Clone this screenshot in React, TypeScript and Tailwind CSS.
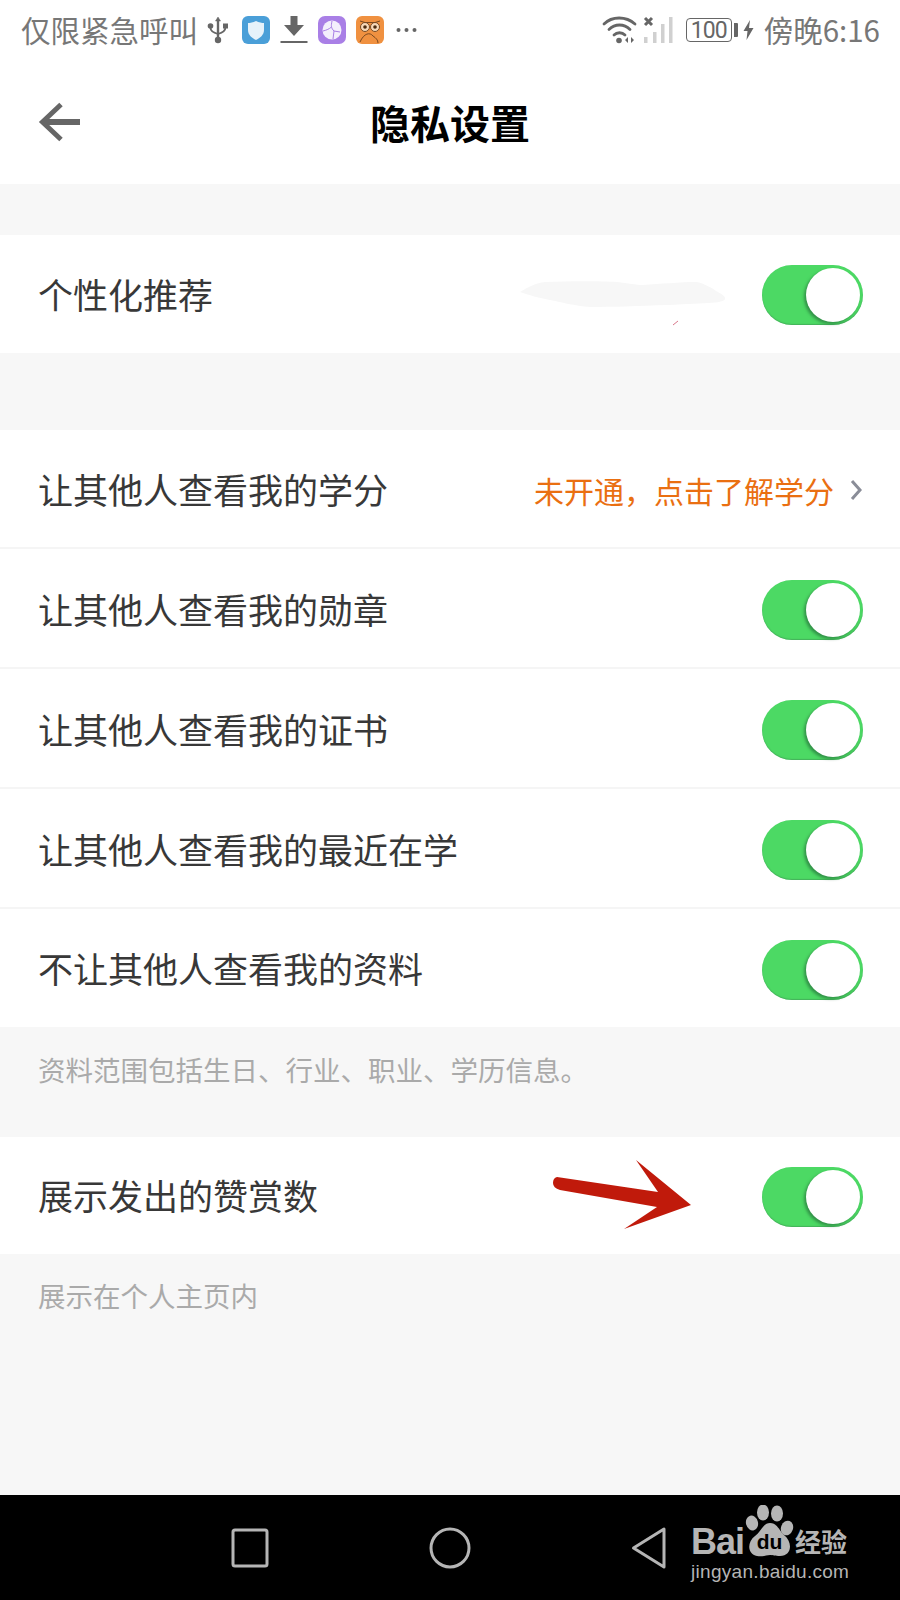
import React from "react";

const FONT = "[font-family:'Noto_Sans_CJK_SC','Noto_Sans',sans-serif]";

function Toggle() {
  return (
    <div className="mt-[2px] flex h-[60px] w-[101px] items-center justify-end rounded-full bg-[#4cd964] pr-[3px] shadow-[inset_0_-1px_1px_rgba(60,140,80,0.5)]">
      <div className="h-[54px] w-[54px] rounded-full bg-white shadow-[-2px_2px_3px_rgba(30,90,50,0.55)]" />
    </div>
  );
}

function Row({ label, children, divider, height = "h-[120px]", extra = "" }: { label: string; children?: React.ReactNode; divider?: boolean; height?: string; extra?: string }) {
  return (
    <div className={`relative flex ${height} items-center justify-between bg-white pl-[38px] pr-[37px] ${divider ? "border-b-2 border-[#f5f5f5] pt-[2px]" : ""} ${extra}`}>
      <span className="mb-[2px] text-[35px] leading-none text-[#383838]">{label}</span>
      {children}
    </div>
  );
}

function StatusIcons() {
  return (
    <div className="ml-[9px] flex items-center">
      {/* usb */}
      <svg width="22" height="30" viewBox="0 0 22 30" className="mr-[13px]">
        <g fill="#666" stroke="#666">
          <path d="M11 2 L8.500 6 H13.500 Z" strokeWidth="0.5" />
          <path d="M11 5 V24" strokeWidth="2.400" fill="none" />
          <circle cx="11" cy="25" r="3.200" stroke="none" />
          <circle cx="3.500" cy="11" r="2.800" stroke="none" />
          <rect x="16" y="8.500" width="5" height="5" stroke="none" />
          <path d="M3.500 11 V13 Q3.500 17 11 19 Q18.500 17 18.500 12" strokeWidth="1.800" fill="none" />
        </g>
      </svg>
      {/* shield app */}
      <svg width="28" height="28" viewBox="0 0 28 28" className="mr-[10px]">
        <rect width="28" height="28" rx="6" fill="#4a9fd8" />
        <path d="M14 5 C17 6.500 20 7 22 7 V14 C22 19 18 22 14 24 C10 22 6 19 6 14 V7 C8 7 11 6.500 14 5 Z" fill="#e6f2fa" />
      </svg>
      {/* download */}
      <svg width="28" height="30" viewBox="0 0 28 30" className="mr-[10px]">
        <path d="M10.500 1 H17.500 V10 H24 L14 21 L4 10 H10.500 Z" fill="#666" />
        <rect x="0.500" y="26" width="27" height="2" fill="#666" />
      </svg>
      {/* purple app */}
      <svg width="28" height="28" viewBox="0 0 28 28" className="mr-[10px]">
        <rect width="28" height="28" rx="7" fill="#a97fe6" />
        <circle cx="14" cy="14" r="9.500" fill="#f4effc" />
        <path d="M14 5 C13 10 13 12 16 15 L22 16 M16 15 L15 23 M5 15 C9 14 11 13 13.500 11" stroke="#a97fe6" strokeWidth="1" fill="none" />
      </svg>
      {/* owl app */}
      <svg width="28" height="28" viewBox="0 0 28 28" className="mr-[12px]">
        <rect width="28" height="28" rx="6" fill="#f09140" />
        <circle cx="9" cy="11" r="4.500" fill="#f6d9b8" stroke="#7a4a20" strokeWidth="1" />
        <circle cx="19" cy="11" r="4.500" fill="#f6d9b8" stroke="#7a4a20" strokeWidth="1" />
        <circle cx="9" cy="11" r="1.800" fill="#4a2c10" />
        <circle cx="19" cy="11" r="1.800" fill="#4a2c10" />
        <path d="M4 5 L9 6.500 H19 L24 5 M4 26 C8 17 14 16 17 20 C20 22 22 24 22 27" stroke="#7a4a20" strokeWidth="1" fill="none" />
      </svg>
      {/* dots */}
      <svg width="21" height="6" viewBox="0 0 21 6">
        <circle cx="2.500" cy="3" r="2" fill="#666" />
        <circle cx="10.500" cy="3" r="2" fill="#666" />
        <circle cx="18.500" cy="3" r="2" fill="#666" />
      </svg>
    </div>
  );
}

function StatusRight() {
  return (
    <div className="flex items-center">
      {/* wifi */}
      <svg width="36" height="30" viewBox="0 0 36 30" className="mr-[5px]">
        <g fill="none" stroke="#666" strokeWidth="2.800" strokeLinecap="round">
          <path d="M2 9 C10 1 24 1 33 9" />
          <path d="M7 14.500 C13 8.500 22 8.500 28 14.500" />
          <path d="M12 20 C15 17 20 17 23 20" />
        </g>
        <circle cx="17" cy="25.500" r="2.800" fill="#666" />
        <path d="M26 22 V28 L23 25 Z M29 22 V28 L32 25 Z" fill="#666" />
      </svg>
      {/* signal */}
      <svg width="30" height="30" viewBox="0 0 30 30" className="mr-[13px]">
        <path d="M2 3 L9 10 M9 3 L2 10" stroke="#666" strokeWidth="3" />
        <rect x="1" y="22" width="3.500" height="6" fill="#d0d0d0" />
        <rect x="10" y="17" width="3.500" height="11" fill="#d0d0d0" />
        <rect x="18" y="9" width="3.500" height="19" fill="#d0d0d0" />
        <rect x="26" y="2" width="3.500" height="26" fill="#d0d0d0" />
      </svg>
      {/* battery */}
      <div className="flex h-[24px] w-[46px] items-center justify-center rounded-[4px] border border-[#666] text-[23px] leading-none tracking-[-1px] text-[#666] [font-family:'Roboto',sans-serif]">100</div>
      <div className="ml-[2px] mr-[5px] h-[14px] w-[4px] rounded-r-[1px] bg-[#666]" />
      <svg width="11" height="20" viewBox="0 0 11 20" className="mr-[10px]">
        <path d="M7 0 L0.500 11 H4.500 L3.500 20 L10.500 8 H6 Z" fill="#666" />
      </svg>
      <span className="text-[29.500px] leading-none text-[#777777]">傍晚6:16</span>
    </div>
  );
}

function Arrow() {
  return (
    <svg width="150" height="80" viewBox="0 0 150 80" className="absolute left-[548px] top-[20px]">
      <path d="M9 20 Q5 21 5 26 Q5 31 12 33 L109 50 L76 72 L143 48 L88 3 L110 35 Z" fill="#c01a0b" />
    </svg>
  );
}

function BaiduLogo() {
  return (
    <div className="absolute left-[691px] top-[10px] flex w-[165px] flex-col text-[#b5b5b5]">
      <div className="flex h-[52px] items-end">
        <span className="mb-[-3px] w-[54px] text-[36px] font-bold leading-[36px] tracking-[-1px] [font-family:'Liberation_Sans',sans-serif]">Bai</span>
        <svg width="50" height="52" viewBox="0 0 50 52">
          <g fill="#b5b5b5">
            <ellipse cx="7" cy="18" rx="6" ry="7.500" transform="rotate(-15 7 18)" />
            <ellipse cx="18" cy="7.500" rx="6" ry="8" />
            <ellipse cx="32" cy="8.500" rx="6" ry="8" />
            <ellipse cx="42" cy="23" rx="6" ry="7.500" transform="rotate(20 42 23)" />
            <path d="M25 18 C32 18 34 25 39 30 C48 37 47 51 35 51 C30 51 28 50 25 50 C21 50 18 52 12 51 C2 49 2 37 10 31 C16 27 18 18 25 18 Z" />
          </g>
          <text x="24.500" y="44" textAnchor="middle" fontSize="21" fontWeight="700" fill="#000" fontFamily="'Liberation Sans',sans-serif">du</text>
        </svg>
        <span className="mb-[3px] text-[26px] font-bold leading-[26px]">经验</span>
      </div>
      <span className="mt-[4px] text-[19px] leading-[22px] tracking-[0.3px] [font-family:'Liberation_Sans',sans-serif]">jingyan.baidu.com</span>
    </div>
  );
}

export default function App() {
  return (
    <div className={`flex h-[1600px] w-[900px] flex-col overflow-hidden bg-[#f7f7f7] ${FONT}`}>
      <div className="flex h-[60px] items-center justify-between bg-white pl-[21px] pr-[20px]">
        <div className="flex items-center">
          <span className="text-[29.500px] leading-none text-[#777777]">仅限紧急呼叫</span>
          <StatusIcons />
        </div>
        <StatusRight />
      </div>

      <div className="relative flex h-[124px] items-center justify-center bg-white">
        <svg width="44" height="42" viewBox="0 0 44 42" className="absolute left-[38px] top-[41px]">
          <path d="M42 21 H5" fill="none" stroke="#666" strokeWidth="6" />
          <path d="M23 3.500 L4.500 21 L23 38.500" fill="none" stroke="#666" strokeWidth="5" />
        </svg>
        <span className="text-[40px] font-bold leading-none text-black">隐私设置</span>
      </div>

      <div className="h-[51px]" />

      <Row label="个性化推荐" height="h-[118px]">
        <svg width="240" height="80" viewBox="0 0 240 80" className="absolute left-[500px] top-[5px]">
          <path d="M20 52 C28 47 36 43 45 42 C70 41 100 41 117 42 C128 43 136 45 143 45 C160 44 180 42 197 42 C205 44 212 48 216 51 C221 54 226 56 225 59 C224 63 210 63 167 65 C140 66 110 67 90 67 C75 66 60 62 50 60 C40 58 28 55 20 52 Z" fill="#f7f7f7" />
        </svg>
        <svg width="8" height="6" viewBox="0 0 8 6" className="absolute left-[672px] top-[85px]">
          <path d="M1 5 L6 1" stroke="#d9778a" strokeWidth="1" />
        </svg>
        <Toggle />
      </Row>

      <div className="h-[77px]" />

      <Row label="让其他人查看我的学分" divider height="h-[119px]">
        <div className="flex items-center">
          <span className="text-[30px] leading-none text-[#ea6f11]">未开通，点击了解学分</span>
          <svg width="13" height="22" viewBox="0 0 13 22" className="ml-[16px]">
            <path d="M2 2 L10 11 L2 20" fill="none" stroke="#8a8d98" strokeWidth="3" />
          </svg>
        </div>
      </Row>
      <Row label="让其他人查看我的勋章" divider><Toggle /></Row>
      <Row label="让其他人查看我的证书" divider><Toggle /></Row>
      <Row label="让其他人查看我的最近在学" divider><Toggle /></Row>
      <Row label="不让其他人查看我的资料" height="h-[118px]" extra="pt-[1px]"><Toggle /></Row>

      <div className="flex h-[110px] items-start pl-[38px] pt-[29px]">
        <span className="text-[27.500px] leading-none text-[#aaaaaa]">资料范围包括生日、行业、职业、学历信息。</span>
      </div>

      <Row label="展示发出的赞赏数" height="h-[117px]">
        <Arrow />
        <Toggle />
      </Row>

      <div className="flex flex-1 items-start pl-[38px] pt-[28px]">
        <span className="text-[27.500px] leading-none text-[#aaaaaa]">展示在个人主页内</span>
      </div>

      <div className="relative flex h-[105px] items-center bg-black pl-[231px]">
        <svg width="38" height="40" viewBox="0 0 38 40" className="mr-[160px]">
          <rect x="2" y="2" width="34" height="36" rx="2" fill="none" stroke="#b5b5b5" strokeWidth="3" />
        </svg>
        <svg width="42" height="42" viewBox="0 0 42 42" className="mr-[160px]">
          <circle cx="21" cy="21" r="19" fill="none" stroke="#b5b5b5" strokeWidth="3" />
        </svg>
        <svg width="36" height="44" viewBox="0 0 36 44">
          <path d="M33 3 V41 L2.500 22 Z" fill="none" stroke="#b5b5b5" strokeWidth="3" strokeLinejoin="round" />
        </svg>
        <BaiduLogo />
      </div>
    </div>
  );
}
